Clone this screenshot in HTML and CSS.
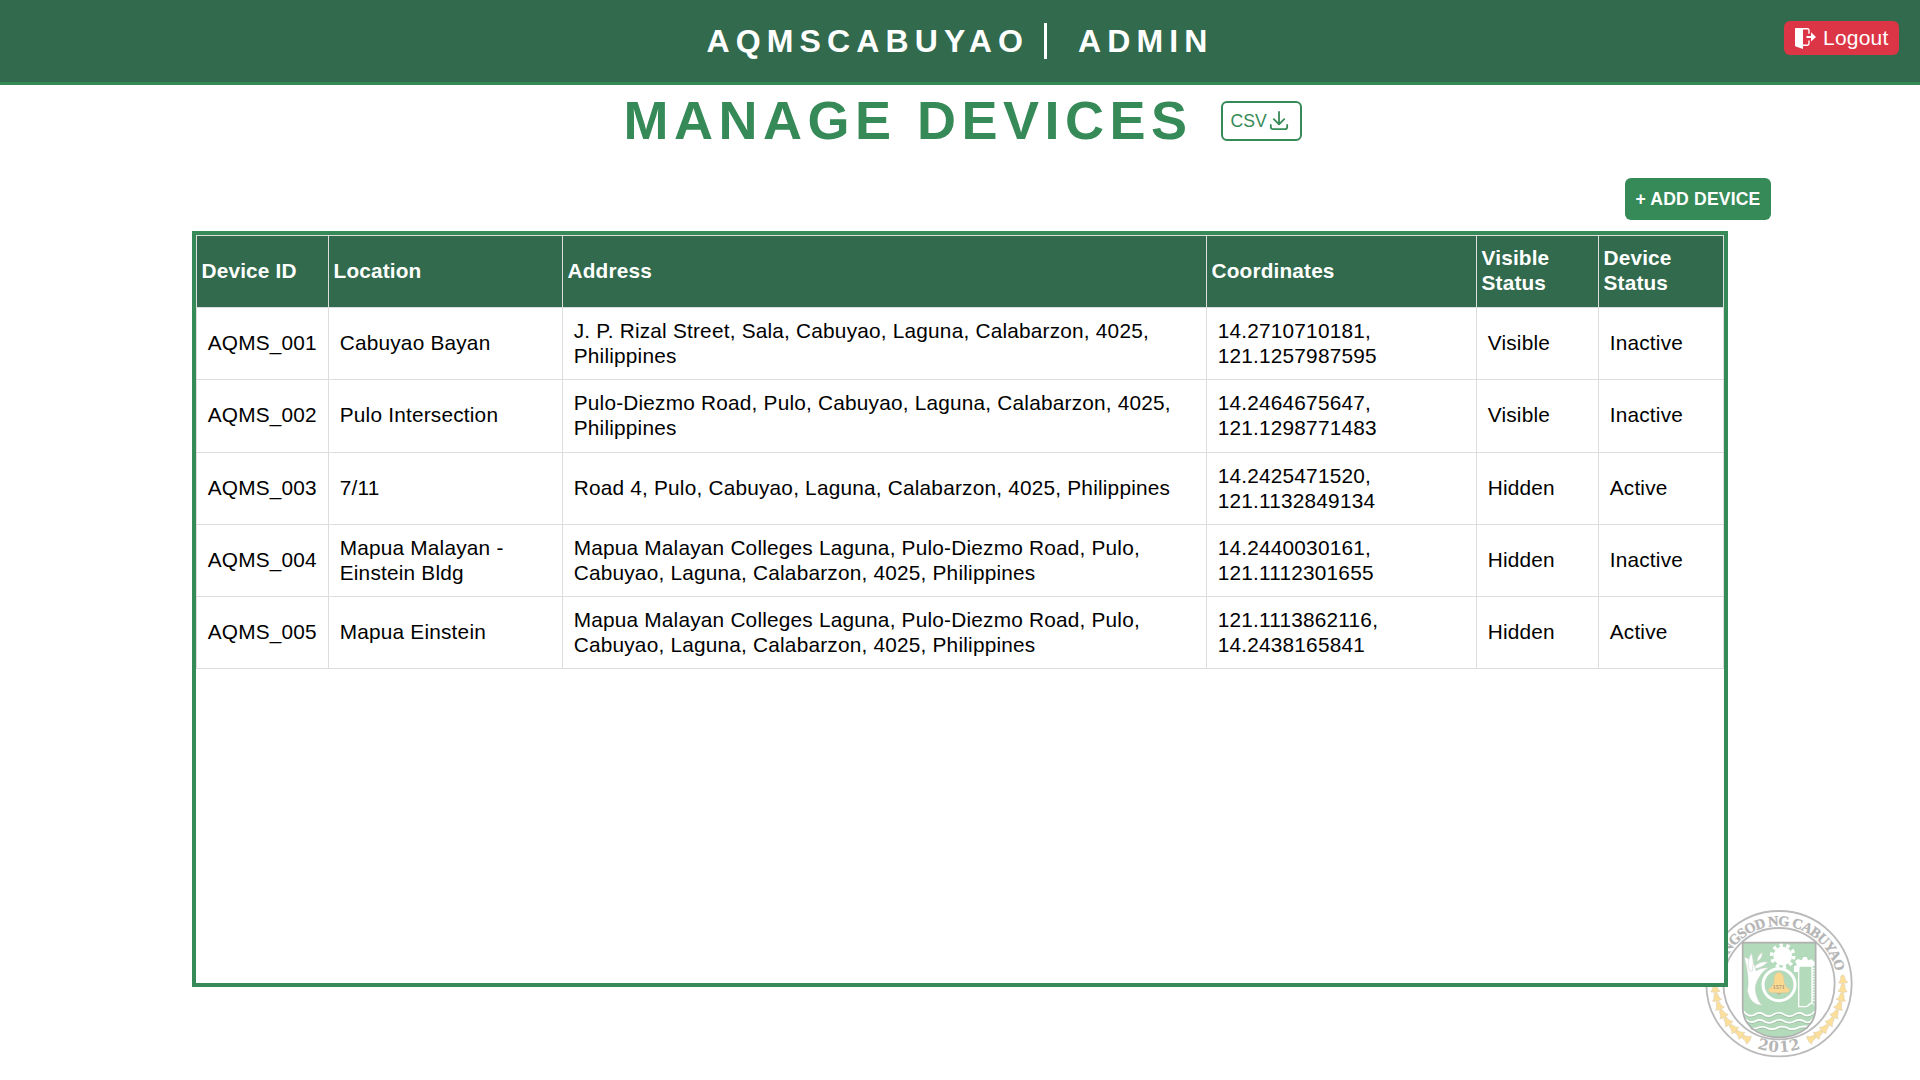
FILE: index.html
```html
<!DOCTYPE html>
<html lang="en">
<head>
<meta charset="utf-8">
<title>Manage Devices</title>
<link rel="stylesheet" href="styles.css">
</head>
<body>
<svg class="seal" viewBox="0 0 540 540" aria-hidden="true">
  <defs>
    <path id="arc-top" d="M93 281A174 174 0 0 1 441 281"/>
    <path id="arc-bottom" d="M62 281A205 205 0 0 0 472 281"/>
    <path id="bell" d="M454 271Q459 265 464 271L466 280Q467 286 473 291Q459 297 445 291Q451 286 452 280Z"/>
    <g id="bell-row">
      <use href="#bell" transform="rotate(-4 267 281)"/><use href="#bell" transform="rotate(4 267 281)"/><use href="#bell" transform="rotate(12 267 281)"/><use href="#bell" transform="rotate(20 267 281)"/><use href="#bell" transform="rotate(28 267 281)"/><use href="#bell" transform="rotate(36 267 281)"/><use href="#bell" transform="rotate(44 267 281)"/><use href="#bell" transform="rotate(51.5 267 281)"/><use href="#bell" transform="rotate(59 267 281)"/>
    </g>
  </defs>
  <circle class="ring" cx="267" cy="281" r="218"/>
  <circle class="ring" cx="267" cy="281" r="167"/>
  <text class="seal-name"><textPath href="#arc-top" startOffset="50%" text-anchor="middle" textLength="474">LUNGSOD NG CABUYAO</textPath></text>
  <text class="seal-year"><textPath href="#arc-bottom" startOffset="50%" text-anchor="middle" textLength="134">2012</textPath></text>
  <use class="bells" href="#bell-row"/>
  <use class="bells" href="#bell-row" transform="translate(534 0) scale(-1 1)"/>
  <path class="shield" d="M158 158H377V355C377 405 330 442 267 442C205 442 158 405 158 355Z"/>
  <circle class="gear" cx="278" cy="198" r="28"/>
  <circle class="gear-teeth" cx="278" cy="198" r="33"/>
  <path class="white" d="M312 246V229L321 225L315 214L324 207L335 211L340 201H350L354 211L365 208L374 216V228H328V246Z"/>
  <path class="post" d="M328 228H366V338L350 350H326V240Z"/>
  <path class="teeth" d="M370 233V335"/>
  <path class="post-foot" d="M350 349L364 338L374 345"/>
  <path class="leaf" d="M163 201Q193 208 198 242Q214 232 236 233Q216 244 208 261Q190 286 199 315Q205 336 216 346Q180 344 172 302Q180 270 163 201Z"/>
  <path class="leaf" d="M178 242Q169 216 184 188Q194 214 187 244ZM201 212Q202 197 217 187Q218 205 202 214ZM194 230Q208 213 234 216Q218 232 198 236Z"/>
  <circle class="medal" cx="267" cy="284" r="48"/>
  <path class="big-bell" d="M259 250Q267 244 274 250Q282 255 282 274Q284 291 301 300L292 308H242L233 300Q250 291 252 274Q252 255 259 250Z"/>
  <text class="bell-year" x="266" y="298">1571</text>
  <path class="knob" d="M260 309H274L267 315Z"/>
  <path class="wave-shade" d="M161 368Q174 386 192 379Q207 368 219 376Q235 388 251 377Q268 367 283 378Q299 388 315 377Q330 368 342 378Q359 386 374 368M166 391Q181 406 197 397Q211 389 226 400Q240 406 253 398Q270 388 285 399Q301 406 315 397Q331 389 345 399Q361 405 369 390M181 416Q193 424 207 416Q221 411 235 420Q253 424 267 415Q284 411 299 421Q316 423 329 415Q343 412 354 414"/>
  <path class="wave" d="M161 364Q174 382 192 375Q207 364 219 372Q235 384 251 373Q268 363 283 374Q299 384 315 373Q330 364 342 374Q359 382 374 364M166 387Q181 402 197 393Q211 385 226 396Q240 402 253 394Q270 384 285 395Q301 402 315 393Q331 385 345 395Q361 401 369 386M181 412Q193 420 207 412Q221 407 235 416Q253 420 267 411Q284 407 299 417Q316 419 329 411Q343 408 354 410"/>
  <path class="shield-edge" d="M158 158H377V355C377 405 330 442 267 442C205 442 158 405 158 355Z"/>
</svg>

<header class="topbar">
  <div class="brand"><span class="brand-name">AQMSCABUYAO</span><span class="brand-role">ADMIN</span></div>
  <button class="logout">
    <svg class="logout-icon" viewBox="0 0 21 21"><path d="M0 .8Q0 0 .8 0H9L8 1.6V21L.8 18.4Q0 18 0 17.4Z" fill="#fff"/><path d="M7 .7H12.3Q14 .7 14 2.4V5.8M14 12.4V15.6Q14 17.3 12.3 17.3H8" fill="none" stroke="#fff" stroke-width="1.4"/><path d="M11.5 7.9H16V4.2L21 9L16 13.6V10.1H11.5Z" fill="#fff"/></svg>
    <span>Logout</span>
  </button>
</header>

<main class="page">
  <div class="title-row">
    <h1 class="title">MANAGE DEVICES</h1>
    <button class="csv"><span>CSV</span><svg class="csv-icon" viewBox="0 0 20 20"><path d="M10 1V13M4.8 8.2L10 13.4L15.2 8.2M1.8 14V16Q1.8 18.2 4 18.2H16Q18.2 18.2 18.2 16V14"/></svg></button>
  </div>
  <div class="actions"><button class="add">+ ADD DEVICE</button></div>
  <div class="table-box">
    <table class="devices">
      <colgroup><col class="c-id"><col class="c-loc"><col class="c-addr"><col class="c-coord"><col class="c-vis"><col class="c-stat"></colgroup>
      <thead><tr><th>Device ID</th><th>Location</th><th>Address</th><th>Coordinates</th><th>Visible Status</th><th>Device Status</th></tr></thead>
      <tbody>
        <tr><td>AQMS_001</td><td>Cabuyao Bayan</td><td>J. P. Rizal Street, Sala, Cabuyao, Laguna, Calabarzon, 4025, Philippines</td><td>14.2710710181, 121.1257987595</td><td>Visible</td><td>Inactive</td></tr>
        <tr><td>AQMS_002</td><td>Pulo Intersection</td><td>Pulo-Diezmo Road, Pulo, Cabuyao, Laguna, Calabarzon, 4025, Philippines</td><td>14.2464675647, 121.1298771483</td><td>Visible</td><td>Inactive</td></tr>
        <tr><td>AQMS_003</td><td>7/11</td><td>Road 4, Pulo, Cabuyao, Laguna, Calabarzon, 4025, Philippines</td><td>14.2425471520, 121.1132849134</td><td>Hidden</td><td>Active</td></tr>
        <tr><td>AQMS_004</td><td>Mapua Malayan - Einstein Bldg</td><td>Mapua Malayan Colleges Laguna, Pulo-Diezmo Road, Pulo, Cabuyao, Laguna, Calabarzon, 4025, Philippines</td><td>14.2440030161, 121.1112301655</td><td>Hidden</td><td>Inactive</td></tr>
        <tr><td>AQMS_005</td><td>Mapua Einstein</td><td>Mapua Malayan Colleges Laguna, Pulo-Diezmo Road, Pulo, Cabuyao, Laguna, Calabarzon, 4025, Philippines</td><td>121.1113862116, 14.2438165841</td><td>Hidden</td><td>Active</td></tr>
      </tbody>
    </table>
  </div>
</main>
</body>
</html>
```
FILE: styles.css
```css
* { box-sizing: border-box; }
body { margin: 0; height: 1080px; overflow: hidden; background: #fff; color: #000; font-family: "Liberation Sans", Arial, sans-serif; }
button { font-family: inherit; margin: 0; }

.topbar { display: grid; grid-template-columns: 1fr auto 1fr; height: 85px; padding: 0 21px; background: #316a4c; border-bottom: 3px solid #368a57; }
.brand { grid-column: 2; display: flex; align-items: center; height: 82px; color: #fff; font-size: 32px; font-weight: bold; letter-spacing: 6.15px; line-height: 36px; }
.brand-name { padding-right: 15px; border-right: 3px solid #fff; }
.brand-role { padding-left: 31px; }
.logout { justify-self: end; display: flex; align-items: center; gap: 7px; width: 115px; height: 34px; margin-top: 21px; padding: 0 0 0 11px; border: 0; border-radius: 6px; background: #dc3545; color: #fff; font-size: 21px; letter-spacing: .2px; line-height: 24px; }
.logout-icon { width: 21px; height: 21px; flex: none; }

.page { position: relative; }
.title-row { display: flex; justify-content: center; align-items: center; gap: 28px; height: 72px; padding-left: 5px; }
.title { margin: 0; padding-bottom: 2px; color: #368a57; font-size: 54px; line-height: 62px; letter-spacing: 5.5px; }
.csv { display: flex; align-items: center; gap: 2px; width: 81px; height: 40px; padding: 0 0 0 8px; border: 2px solid #368a57; border-radius: 6px; background: #fff; color: #368a57; font-size: 17.6px; }
.csv-icon { width: 20px; height: 20px; fill: none; stroke: #368a57; stroke-width: 1.8; stroke-linecap: round; stroke-linejoin: round; }

.actions { display: flex; justify-content: flex-end; padding: 21px 149px 11px 0; }
.add { width: 146px; height: 42px; padding: 0; border: 0; border-radius: 6px; background: #368a57; color: #fff; font-size: 17.6px; font-weight: bold; letter-spacing: .17px; white-space: nowrap; }

.table-box { width: 1536px; height: 756px; margin: 0 auto; border: 4px solid #368a57; background: #fff; }
.devices { width: 1528px; table-layout: fixed; border-collapse: collapse; font-size: 20.8px; line-height: 25px; text-align: left; }
.c-id { width: 132px; }
.c-loc { width: 234px; }
.c-addr { width: 644px; }
.c-coord { width: 270px; }
.c-vis { width: 122px; }
.devices th, .devices td { height: 72px; border: 1px solid #ddd; vertical-align: middle; }
.devices tbody tr:nth-child(2) td { height: 73px; padding-bottom: 3px; }
.devices th { padding: 0 4px 3px 4.6px; background: #316a4c; color: #fff; letter-spacing: .15px; }
.devices td { padding: 0 10px 2px 10.7px; letter-spacing: .21px; }

.seal { position: absolute; left: 1690px; top: 890px; width: 180px; height: 180px; }
.ring { fill: none; stroke: #bababa; stroke-width: 5.5; }
.seal-name, .seal-year, .bell-year { font-family: "Liberation Serif", serif; font-weight: bold; fill: #b5b5b5; }
.seal-name { font-size: 43px; stroke: #b5b5b5; stroke-width: 1; }
.seal-year { font-family: "DejaVu Serif", serif; font-size: 45px; }
.bell-year { font-size: 18px; text-anchor: middle; fill: #a99b7d; }
.bells { fill: #fbdf9b; stroke: #d9cdb0; stroke-width: 1.5; }
.shield { fill: #b3dabb; }
.shield-edge { fill: none; stroke: #b0b0b0; stroke-width: 5; }
.gear { fill: #fff; }
.gear-teeth { fill: none; stroke: #fff; stroke-width: 11; stroke-dasharray: 10 10.73; }
.white { fill: #fff; }
.post { fill: #b3dabb; stroke: #fff; stroke-width: 4; }
.post-foot { fill: none; stroke: #fff; stroke-width: 3; }
.teeth { fill: none; stroke: #fff; stroke-width: 8; stroke-dasharray: 4 4; }
.leaf { fill: #fff; stroke: #c3cfc5; stroke-width: 1.5; }
.medal { fill: #b3dabb; stroke: #fff; stroke-width: 9; }
.big-bell { fill: #fbd890; stroke: #d8c69a; stroke-width: 1.5; }
.knob { fill: #c9b184; }
.wave { fill: none; stroke: #fff; stroke-width: 5; }
.wave-shade { fill: none; stroke: #a5bfa9; stroke-width: 3; }
```
